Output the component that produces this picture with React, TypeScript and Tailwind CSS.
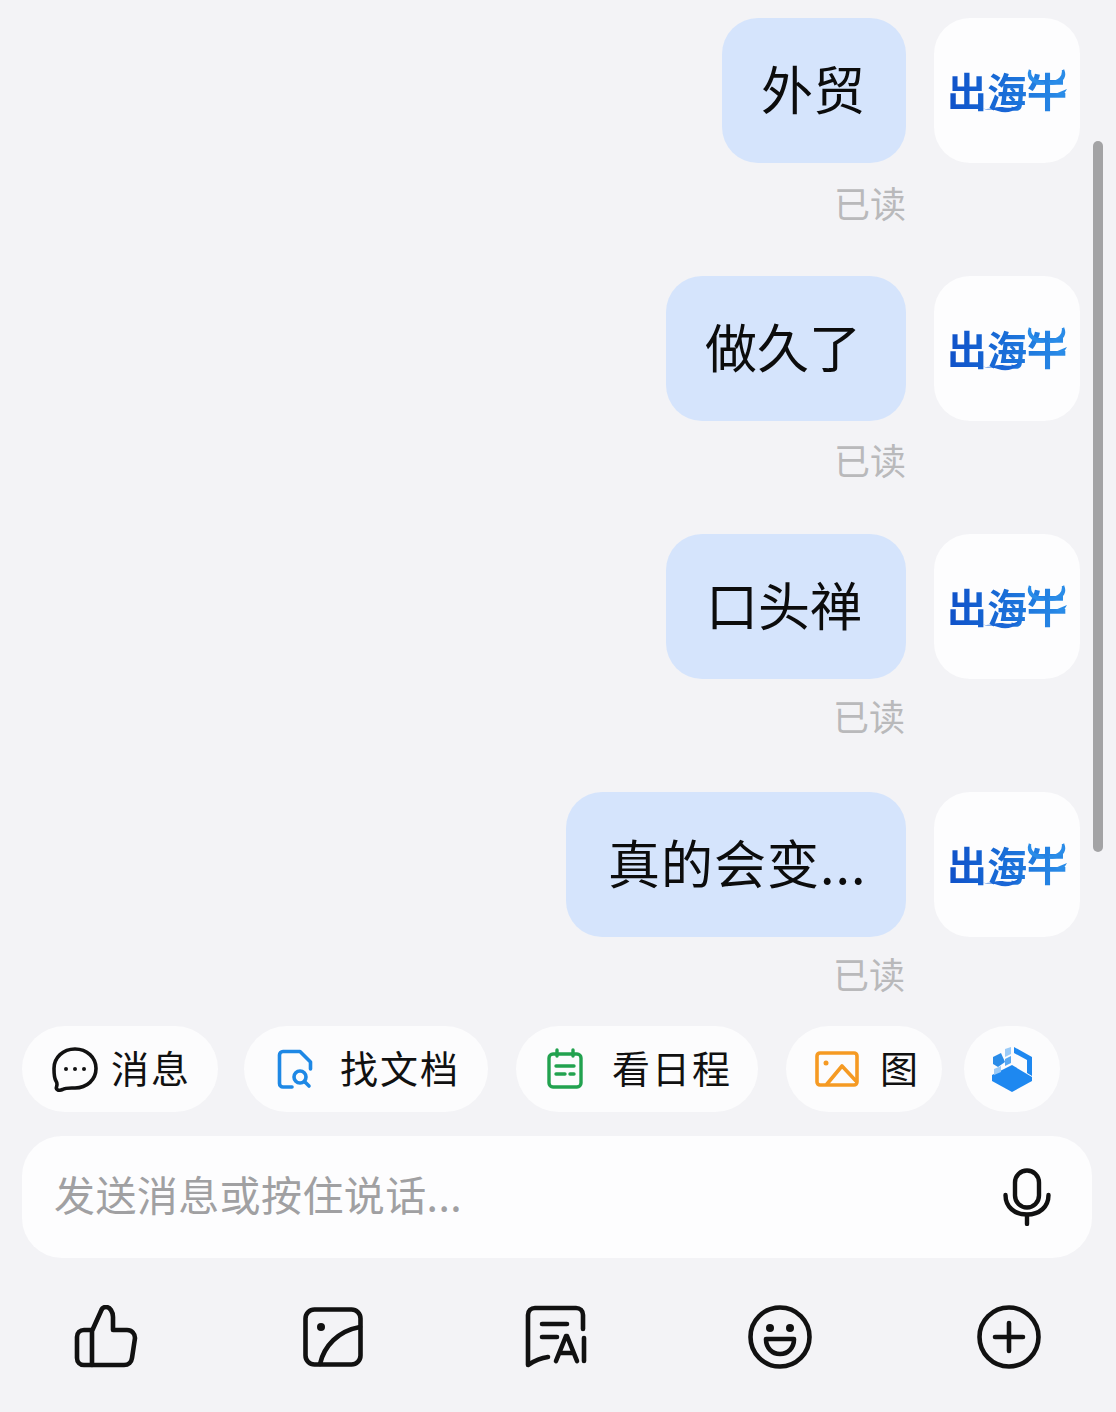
import React from 'react';

const messages = [
  { text: '外贸', box: 'w-[184px] pl-[39px]', read: 'mt-[16px]' },
  { text: '做久了', box: 'w-[240px] pl-[39px]', read: 'mt-[15px]' },
  { text: '口头禅', box: 'w-[240px] pl-[40px]', read: 'mt-[13px] mr-[1px]' },
  { text: '真的会变...', box: 'w-[340px] pl-[42px] tracking-[1px]', read: 'mt-[13px] mr-[1px]' },
];

const Logo: React.FC = () => (
  <div className="relative w-[120px] h-[50px] flex items-center">
    <span className="pb-[2px] text-[40px] leading-[46px] font-bold whitespace-nowrap bg-gradient-to-r from-[#1050c8] to-[#2a8ce8] bg-clip-text text-transparent">
      出海牛
    </span>
    {/* horns and wave */}
    <svg className="absolute left-0 top-0" width="120" height="50" viewBox="0 0 120 50" fill="none">
      <path d="M83 4c-1 6 3 12 14 13-8 2-18-4-14-13z" fill="#2a8ce8" stroke="#2a8ce8" strokeWidth="2.500" />
      <path d="M116 4c1 6-3 12-14 13 8 2 18-4 14-13z" fill="#2a8ce8" stroke="#2a8ce8" strokeWidth="2.500" />
      <path d="M34 42c7 3 12-1 19-1s11 3 20-3c-5 8-14 10-22 7-7-3-11 0-17-3z" fill="#1a66d6" />
      <path d="M108 28l12-5-5 8z" fill="#2a8ce8" />
    </svg>
  </div>
);

const MessageRow: React.FC<{ text: string; box: string; read: string }> = ({ text, box, read }) => (
  <div className="h-[258px] shrink-0 flex justify-end pr-[36px]">
    <div className="flex flex-col items-end">
      <div className={`h-[145px] rounded-[36px] bg-[#d5e4fc] flex items-center pb-[6px] text-[52px] text-[#0c0c0c] whitespace-nowrap ${box}`}>
        {text}
      </div>
      <div className={`text-[36px] leading-[46px] text-[#b9b9bb] ${read}`}>已读</div>
    </div>
    <div className="ml-[28px] w-[146px] h-[145px] rounded-[36px] bg-[#fdfdfe] flex items-center justify-center">
      <Logo />
    </div>
  </div>
);

const ChatIcon = () => (
  <svg width="48" height="46" viewBox="0 0 48 46" fill="none" stroke="#111" strokeWidth="3.6" strokeLinejoin="round">
    <path d="M24 3c12 0 21 8.500 21 19.500S36 42 24 42c-4 0-9-.5-12.500 1.500C8 45 4.500 44 5.500 41c.7-2 .8-4-.5-6C3 32 3 27 3 22.500 3 11.500 12 3 24 3z" />
    <circle cx="15" cy="23" r="2" fill="#111" stroke="none" />
    <circle cx="24" cy="23" r="2" fill="#111" stroke="none" />
    <circle cx="33" cy="23" r="2" fill="#111" stroke="none" />
  </svg>
);

const DocIcon = () => (
  <svg width="36" height="40" viewBox="0 0 36 40" fill="none" strokeLinecap="round" strokeLinejoin="round">
    <path d="M15 38H6c-2 0-3.500-1.500-3.500-3.500V6C2.500 4 4 2.500 6 2.500h17L33.500 13v7" stroke="#1e88e5" strokeWidth="3.6" />
    <circle cx="23" cy="28" r="6" stroke="#1e88e5" strokeWidth="3.6" />
    <path d="M28 33l4 4" stroke="#1e88e5" strokeWidth="3.6" />
  </svg>
);

const CalendarIcon = () => (
  <svg width="36" height="42" viewBox="0 0 36 42" fill="none" stroke="#22a24f" strokeWidth="3.4" strokeLinecap="round">
    <rect x="2" y="6" width="32" height="33" rx="4" />
    <path d="M10 2v6M26 2v6" />
    <path d="M9 18h18M9 26h9M23 26h4" />
  </svg>
);

const PictureIcon = () => (
  <svg width="44" height="36" viewBox="0 0 44 36" fill="none" stroke="#f59a23" strokeWidth="3.6" strokeLinejoin="round" strokeLinecap="round">
    <rect x="2" y="2" width="40" height="32" rx="3" />
    <circle cx="11" cy="12" r="2.500" fill="#f59a23" stroke="none" />
    <path d="M12 33l15-18 14 15" />
  </svg>
);

const CubeIcon = () => (
  <svg width="42" height="46" viewBox="0 0 42 46">
    <path d="M1 29l20-10 20 12v4L21 46 1 35z" fill="#1e88f0" />
    <path d="M23 1l18 10v19l-5-3V14L23 7z" fill="#1e88f0" />
    <path d="M2 11l8-4 4 9-7 5-5-3z" fill="#2a8ce8" />
    <path d="M14 3l6-2v7l-6 3z" fill="#9ccbf7" />
    <path d="M3 23l7-3v6l-7 3z" fill="#9ccbf7" />
    <path d="M14 13l6-3v7l-6 3z" fill="#5aa9f2" />
  </svg>
);

const pills = [
  { icon: <ChatIcon />, label: '消息', box: 'w-[196px] pl-[29px]', textBox: 'ml-[12px]' },
  { icon: <DocIcon />, label: '找文档', box: 'w-[244px] ml-[26px] pl-[33px]', textBox: 'ml-[27px]' },
  { icon: <CalendarIcon />, label: '看日程', box: 'w-[242px] ml-[28px] pl-[31px]', textBox: 'ml-[29px]' },
  { icon: <PictureIcon />, label: '图', box: 'w-[156px] ml-[28px] pl-[29px]', textBox: 'ml-[21px]' },
];

const App: React.FC = () => {
  return (
    <div
      className="relative w-[1116px] h-[1412px] overflow-hidden bg-[#f3f3f6] flex flex-col"
      style={{ fontFamily: '"Noto Sans CJK SC", "Noto Sans", sans-serif' }}
    >
      {/* Messages */}
      <div className="pt-[18px] h-[1026px] shrink-0 flex flex-col overflow-hidden">
        {messages.map((m) => (
          <MessageRow key={m.text} text={m.text} box={m.box} read={m.read} />
        ))}
      </div>

      {/* Scrollbar */}
      <div className="absolute left-[1093px] top-[141px] w-[10px] h-[711px] rounded-full bg-[#a3a3a5]" />

      {/* Shortcut pills */}
      <div className="pl-[22px] flex items-center h-[86px] shrink-0">
        {pills.map((p) => (
          <div key={p.label} className={`h-[86px] rounded-full bg-[#fcfcfd] flex items-center ${p.box}`}>
            {p.icon}
            <span className={`pb-[6px] text-[38px] tracking-[2px] text-[#111111] whitespace-nowrap ${p.textBox}`}>{p.label}</span>
          </div>
        ))}
        <div className="ml-[22px] w-[96px] h-[86px] rounded-full bg-[#fcfcfd] flex items-center justify-center">
          <CubeIcon />
        </div>
      </div>

      {/* Input */}
      <div className="mt-[24px] ml-[22px] w-[1070px] h-[122px] shrink-0 rounded-[40px] bg-[#fdfdfe] flex items-center justify-between pl-[32px] pr-[41px]">
        <span className="pb-[6px] text-[41px] tracking-[0.4px] text-[#a0a0a2] whitespace-nowrap">发送消息或按住说话...</span>
        <svg width="48" height="58" viewBox="0 0 48 58" fill="none" stroke="#111" strokeWidth="4.4" strokeLinecap="round">
          <rect x="12" y="2.500" width="24" height="37" rx="12" />
          <path d="M2.500 27c0 12 9 19.500 21.500 19.500S45.500 39 45.500 27" />
          <path d="M24 47v9" />
        </svg>
      </div>

      {/* Toolbar */}
      <div className="mt-[47px] pl-[74px] pr-[75px] flex items-center justify-between">
        <svg width="64" height="64" viewBox="0 0 64 64" fill="none" stroke="#111" strokeWidth="4.6" strokeLinejoin="round" strokeLinecap="round">
          <path d="M18 60H10c-4 0-7-3-7-7V32c0-4 3-7 7-7h8" />
          <path d="M18 60V26l9-20c1-3 3-4 5-4 4 0 7 5 7 10v13h14c5 0 8 4 8 8l-3 20c-.5 4-3.500 7-8 7z" />
        </svg>
        <svg className="ml-[4px]" width="60" height="60" viewBox="0 0 60 60" fill="none" stroke="#111" strokeWidth="4.6" strokeLinecap="round">
          <rect x="2.500" y="2.500" width="55" height="55" rx="9" />
          <circle cx="18" cy="20" r="4" fill="#111" stroke="none" />
          <path d="M17 57c4-18 18-33 40-37" />
        </svg>
        <svg width="62" height="64" viewBox="0 0 62 64" fill="none" stroke="#111" strokeWidth="4.6" strokeLinecap="round" strokeLinejoin="round">
          <path d="M58 24V10c0-4-3-7-7-7H10c-4 0-7 3-7 7v50c6-4 12-7 20-8" />
          <path d="M17 19h25M17 32h15" />
          <path d="M31 56l10-25h1l10 25M35 48h13" />
          <path d="M59 33v23" />
        </svg>
        <svg className="mr-[4px]" width="64" height="64" viewBox="0 0 64 64" fill="none" stroke="#111" strokeWidth="4.6" strokeLinejoin="round">
          <circle cx="32" cy="32" r="29.500" />
          <circle cx="22" cy="23" r="4" fill="#111" stroke="none" />
          <circle cx="42" cy="23" r="4" fill="#111" stroke="none" />
          <path d="M18 34h28c0 9-6 15-14 15s-14-6-14-15z" />
        </svg>
        <svg width="64" height="64" viewBox="0 0 64 64" fill="none" stroke="#111" strokeWidth="4.6" strokeLinecap="round">
          <circle cx="32" cy="32" r="29.500" />
          <path d="M18 32h28M32 18v28" />
        </svg>
      </div>
    </div>
  );
};

export default App;
